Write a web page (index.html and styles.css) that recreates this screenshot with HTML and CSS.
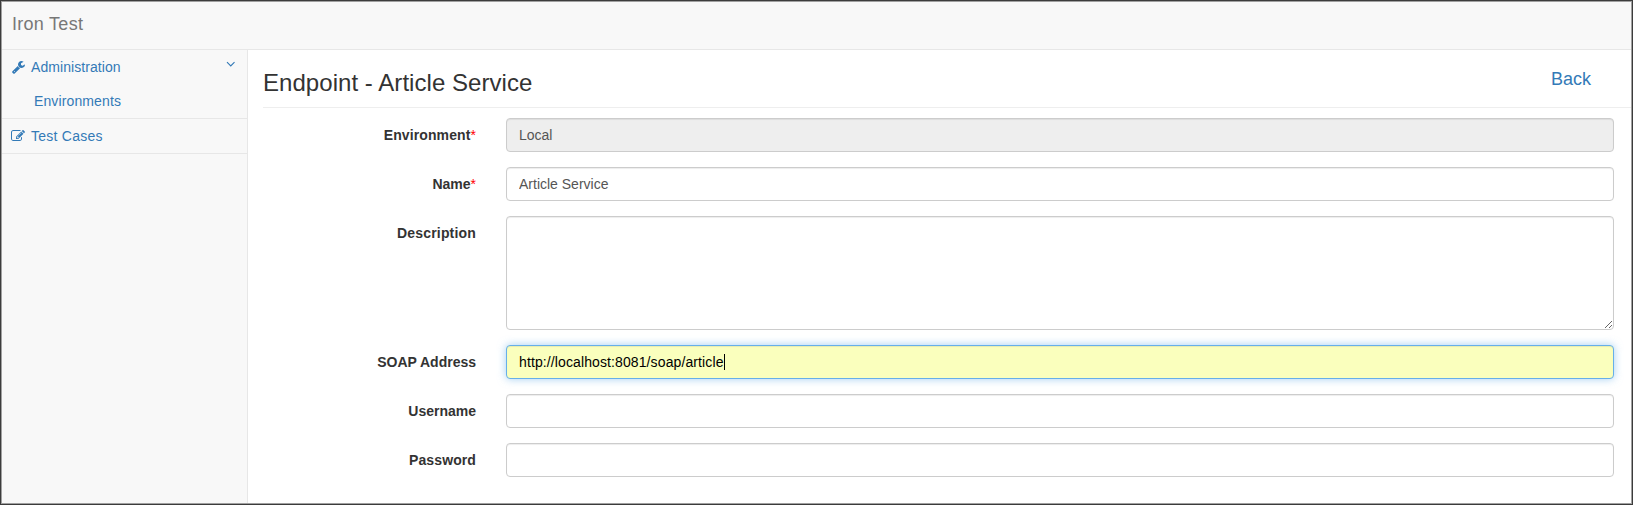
FILE: index.html
```
<!DOCTYPE html>
<html lang="en">
<head>
<meta charset="utf-8">
<title>Iron Test</title>
<link rel="stylesheet" href="styles.css">
</head>
<body>
<div class="frame">
<div class="app">
  <header class="navbar"><a class="brand">Iron Test</a></header>
  <div class="body">
    <nav class="sidebar">
      <div class="group">
        <a class="item"><svg class="icon" viewBox="0 0 1664 1792"><path fill="currentColor" d="M384 1472q0-26-19-45t-45-19-45 19-19 45 19 45 45 19 45-19 19-45zm644-420l-682 682q-37 37-90 37-52 0-91-37L59 1626q-38-36-38-90 0-53 38-91l681-681q39 98 114.500 173.500T1028 1052zm634-435q0 39-23 106-47 134-164.500 217.500T1216 1024q-185 0-316.500-131.500T768 576t131.500-316.500T1216 128q58 0 121.500 16.500T1445 191q16 11 16 28t-16 28l-293 169v224l193 107q5-3 79-48.500t135.500-81T1630 582q15 0 23.500 10t8.500 25z"/></svg><span class="admin">Administration</span><svg class="chevron" viewBox="0 0 10 7"><path fill="none" stroke="currentColor" stroke-width="1.100" d="M1 1.200 4.750 5 8.500 1.200"/></svg></a>
        <a class="item sub">Environments</a>
      </div>
      <div class="group">
        <a class="item"><svg class="icon wide" viewBox="0 0 1792 1792"><path fill="currentColor" d="M888 1184l116-116-152-152-116 116v56h96v96h56zm440-720q-16-16-33 1L945 815q-17 17-1 33t33-1l350-350q17-17 1-33zm80 594v190q0 119-84.500 203.500T1120 1536H288q-119 0-203.500-84.500T0 1248V416q0-119 84.500-203.500T288 128h832q63 0 117 25 15 7 18 23 3 17-9 29l-49 49q-14 14-32 8-23-6-45-6H288q-66 0-113 47t-47 113v832q0 66 47 113t113 47h832q66 0 113-47t47-113v-126q0-13 9-22l64-64q15-15 35-7t20 29zm-96-738l288 288-672 672H640V992zm444 132l-92 92-288-288 92-92q28-28 68-28t68 28l152 152q28 28 28 68t-28 68z"/></svg><span class="cases">Test Cases</span></a>
      </div>
    </nav>
    <main class="content">
      <div class="heading"><h1>Endpoint - Article Service</h1><a class="back">Back</a></div>
      <form class="form">
        <div class="row"><label>Environment<span class="req">*</span></label><input value="Local" disabled></div>
        <div class="row"><label class="snug">Name<span class="req">*</span></label><input value="Article Service"></div>
        <div class="row"><label class="loose">Description</label><textarea></textarea></div>
        <div class="row"><label class="snug">SOAP Address</label><div class="field active"><span>http://localhost:8081/soap/article</span><i class="caret"></i></div></div>
        <div class="row"><label class="snug">Username</label><input></div>
        <div class="row"><label>Password</label><input type="password"></div>
      </form>
    </main>
  </div>
</div>
</div>
</body>
</html>
```
FILE: styles.css
```
* { box-sizing: border-box; }
body {
  margin: 0;
  font: 14px/20px "Liberation Sans", Arial, sans-serif;
  color: #333;
  background: #fff;
}
.frame { height: 505px; border: 1px solid #3c3c3c; }
.app { height: 100%; border: 1px solid #a0a0a0; display: flex; flex-direction: column; }
.navbar {
  height: 48px;
  flex: none;
  padding: 12px 10px;
  background: #f8f8f8;
  border-bottom: 1px solid #e7e7e7;
}
.brand { font-size: 18px; letter-spacing: .28px; color: #777; }
.body { flex: 1; display: flex; min-height: 0; }
.sidebar {
  width: 246px;
  flex: none;
  background: #f8f8f8;
  border-right: 1px solid #e7e7e7;
}
.group { border-bottom: 1px solid #e7e7e7; }
.item {
  height: 34px;
  padding: 0 11px 0 9px;
  display: flex;
  align-items: center;
  color: #337ab7;
}
.item.sub { padding-left: 32px; letter-spacing: .12px; }
.admin { letter-spacing: .07px; }
.cases { letter-spacing: .25px; }
.icon { width: 13px; height: 14px; margin-right: 7px; }
.icon:not(.wide) { margin-left: 1px; margin-right: 6px; }
.icon.wide { width: 14px; margin-right: 6px; }
.chevron { width: 10px; height: 7px; margin: -6px 0 0 auto; }
.content { flex: 1; padding: 0 0 0 15px; }
.heading {
  height: 58px;
  display: flex;
  justify-content: space-between;
  align-items: flex-start;
  border-bottom: 1px solid #eee;
}
h1 { margin: 20px 0 0; font-size: 24px; line-height: 26px; font-weight: 400; letter-spacing: .05px; }
.back { margin: 19px 40px 0 0; font-size: 18px; color: #337ab7; }
.form { padding: 10px 17px 0 0; display: flex; flex-direction: column; gap: 15px; }
.row { display: flex; align-items: flex-start; }
label {
  width: 213px;
  margin-right: 30px;
  padding-top: 7px;
  flex: none;
  text-align: right;
  font-weight: 700;
  letter-spacing: .1px;
}
label.snug { letter-spacing: 0; }
label.loose { letter-spacing: .18px; }
.req { color: red; font-weight: 400; }
input, textarea, .field {
  flex: 1;
  min-width: 0;
  height: 34px;
  margin: 0;
  padding: 6px 12px;
  font: inherit;
  color: #555;
  background: #fff;
  border: 1px solid #ccc;
  border-radius: 4px;
  box-shadow: inset 0 1px 1px rgba(0, 0, 0, .075);
}
textarea { height: 114px; resize: vertical; }
input:disabled { background: #eee; }
.field { display: flex; align-items: center; }
.active {
  color: #000;
  letter-spacing: .11px;
  background: #faffbd;
  border-color: #66afe9;
  box-shadow: inset 0 1px 1px rgba(0, 0, 0, .075), 0 0 8px rgba(102, 175, 233, .6);
}
.caret { width: 1px; height: 16px; background: #000; }
```
